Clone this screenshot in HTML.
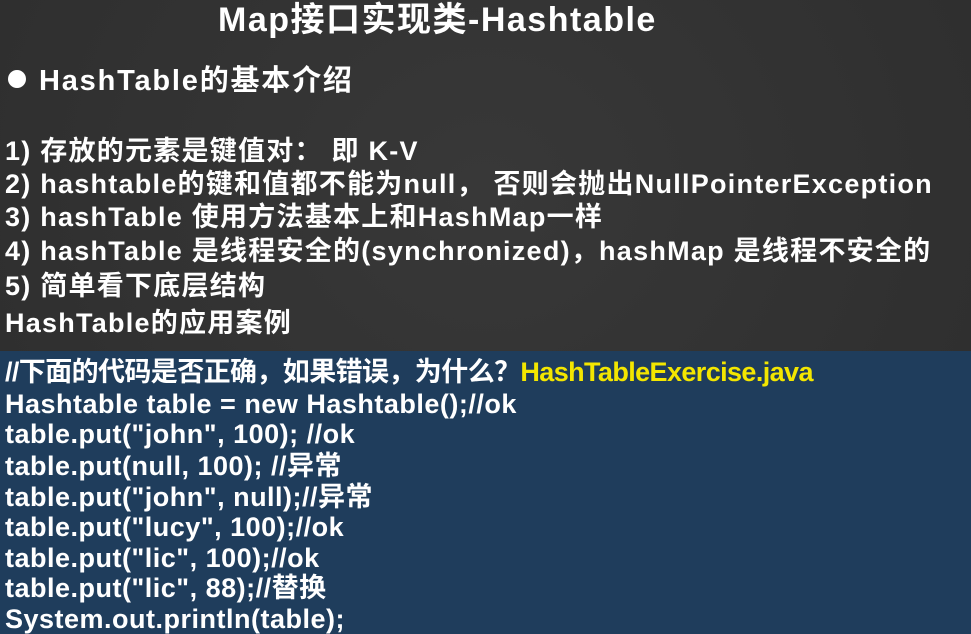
<!DOCTYPE html>
<html><head><meta charset="utf-8"><style>
body{margin:0;width:971px;height:634px;overflow:hidden;background:#323232;font-family:"Liberation Sans","Noto Sans CJK SC",sans-serif;font-weight:bold;color:#fff;position:relative}
.bg{position:absolute;inset:0;background:radial-gradient(ellipse at 50% 30%,#383838,#2c2c2c)}
.t{position:absolute;white-space:nowrap;font-size:27px;line-height:30px;letter-spacing:1.25px}
.c{letter-spacing:0.5px}
.box{position:absolute;left:0;top:351px;width:971px;height:283px;background:#1f3d5c}
.y{color:#f3e600}
</style></head><body>
<div class="bg"></div>
<div class="t" style="left:218px;top:2px;font-size:34px;line-height:36px;letter-spacing:1.5px">Map接口实现类-Hashtable</div>
<div class="t" style="left:8px;top:66px;font-size:29px;letter-spacing:1.8px"><span style="display:inline-block;width:18px;height:18px;border-radius:50%;background:#fff;margin-right:13px;vertical-align:2px"></span>HashTable的基本介绍</div>
<div class="t" style="left:5px;top:136px">1) 存放的元素是键值对：&nbsp;即 K-V</div>
<div class="t" style="left:5px;top:169px">2) hashtable的键和值都不能为null，&nbsp;否则会抛出NullPointerException</div>
<div class="t" style="left:5px;top:202px">3) hashTable 使用方法基本上和HashMap一样</div>
<div class="t" style="left:5px;top:236px">4) hashTable 是线程安全的(synchronized)，hashMap 是线程不安全的</div>
<div class="t" style="left:5px;top:271px">5) 简单看下底层结构</div>
<div class="t" style="left:5px;top:308px">HashTable的应用案例</div>
<div class="box"></div>
<div class="t c" style="left:5px;top:357px;letter-spacing:-0.6px">//下面的代码是否正确，如果错误，为什么？<span class="y">HashTableExercise.java</span></div>
<div class="t c" style="left:5px;top:389px">Hashtable table = new Hashtable();//ok</div>
<div class="t c" style="left:5px;top:419px">table.put("john", 100); //ok</div>
<div class="t c" style="left:5px;top:451px">table.put(null, 100); //异常</div>
<div class="t c" style="left:5px;top:482px">table.put("john", null);//异常</div>
<div class="t c" style="left:5px;top:512px">table.put("lucy", 100);//ok</div>
<div class="t c" style="left:5px;top:543px">table.put("lic", 100);//ok</div>
<div class="t c" style="left:5px;top:573px">table.put("lic", 88);//替换</div>
<div class="t c" style="left:5px;top:604px">System.out.println(table);</div>
</body></html>
